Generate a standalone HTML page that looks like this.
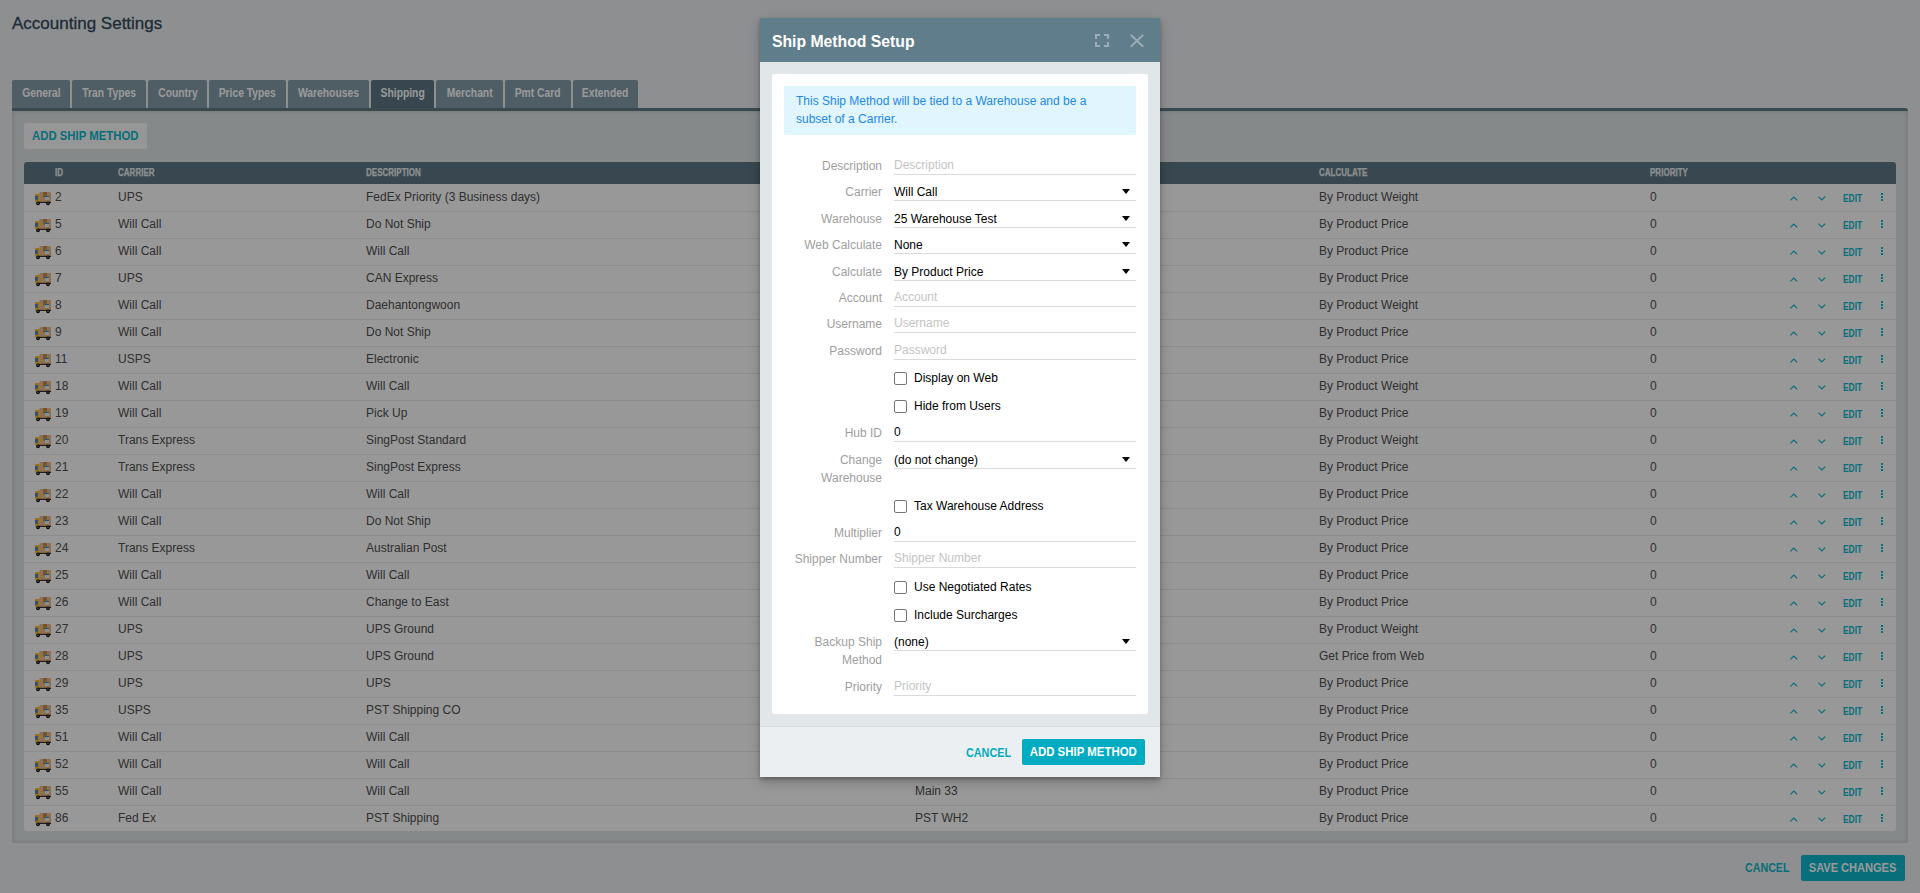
<!DOCTYPE html><html><head><meta charset="utf-8"><title>Ship Method Setup</title><style>
*{box-sizing:border-box;margin:0;padding:0}
html,body{width:1920px;height:893px;overflow:hidden}
body{background:#eceff1;font-family:"Liberation Sans",sans-serif;position:relative;color:#37474f}
.abs{position:absolute}
.title{left:12px;top:14px;font-size:17px;line-height:20px;color:#34495a;-webkit-text-stroke:.3px #34495a;white-space:nowrap}
.tab{position:absolute;top:80px;height:28px;background:#849ca8;border-radius:2px 2px 0 0;color:#fff;font-size:12px;font-weight:bold;line-height:27px;text-align:center;white-space:nowrap}
.sx{display:inline-block;transform:scaleX(.86)}
.tab.act{background:#5e7784}
.bar{left:12px;top:108px;width:1896px;height:3px;background:#627a86;border-radius:0 3px 0 0}
.panel{left:12px;top:111px;width:1896px;height:732px;background:#dfe5e6;border-radius:0 0 3px 3px;box-shadow:inset 0 0 5px rgba(0,0,0,.16)}
.addbtn{left:24px;top:123px;width:123px;height:26px;background:#fafafa;border-radius:2px;color:#0cb8cc;font-size:12px;font-weight:bold;line-height:26px;text-align:center;white-space:nowrap}
.thead{left:24px;top:162px;width:1872px;height:22px;background:#5f7985;border-radius:3px 3px 0 0}
.th{position:absolute;top:-1px;line-height:22px;font-size:11px;font-weight:bold;color:#e8ecee;-webkit-text-stroke:.25px #e8ecee;white-space:nowrap;transform-origin:0 50%;transform:scaleX(.73)}
.tbody{left:24px;top:184px;width:1872px;height:647px;background:#fdfdfd;border-radius:0 0 3px 3px}
.row{position:absolute;left:0;width:1872px;height:27px}
.sep{position:absolute;left:0;width:1872px;height:1px;background:#ebebeb}
.c{position:absolute;top:0;line-height:26px;font-size:12px;color:#505050;white-space:nowrap}
.truck{position:absolute;left:10px;top:7px}
.up{position:absolute;left:1766px;top:11.5px}
.dn{position:absolute;left:1794px;top:11.5px}
.edit{position:absolute;left:1819px;top:1.5px;line-height:26px;font-size:10px;font-weight:bold;color:#0cb8cc;transform-origin:0 50%;transform:scaleX(.84)}
.dots{position:absolute;left:1856px;top:9px}
.fcancel{left:1745px;top:858px;line-height:20px;font-size:12px;font-weight:bold;color:#0cb8cc}
.fsave{left:1801px;top:855px;width:104px;height:26px;background:#0cb8cc;border-radius:2px;color:#fff;font-size:12px;font-weight:bold;line-height:26px;text-align:center;white-space:nowrap}
.overlay{left:0;top:0;width:1920px;height:893px;background:rgba(0,0,0,.4)}
.modal{left:760px;top:18px;width:400px;height:759px;background:#e1e6e9;box-shadow:0 2px 4px rgba(0,0,0,.25),0 5px 12px rgba(0,0,0,.2)}
.mhead{left:0;top:0;width:400px;height:44px;background:#607d8b}
.mtitle{left:12px;top:13px;font-size:17px;line-height:22px;font-weight:bold;color:#fff;white-space:nowrap}
.card{left:12px;top:56px;width:376px;height:640px;background:#fff;border-radius:2px}
.info{left:12px;top:12px;width:352px;height:49px;background:#e1f5fe;border-radius:2px;color:#1e88e5;font-size:12px;line-height:18px;padding:6px 12px}
.lbl{position:absolute;right:266px;font-size:12px;color:#9e9e9e;text-align:right;line-height:18px;white-space:nowrap}
.inp{position:absolute;left:122px;width:242px;border-bottom:1px solid #dadada;font-size:12px;color:#000;line-height:18px;white-space:nowrap}
.ph{color:#c4c4c4}
.tri{position:absolute;right:6px;width:0;height:0;border-left:4px solid transparent;border-right:4px solid transparent;border-top:5px solid #000}
.cb{position:absolute;left:122px;width:13px;height:13px;border:1px solid #767676;border-radius:2px;background:#fff}
.cbt{position:absolute;left:142px;font-size:12px;color:#000;line-height:18px;white-space:nowrap}
.mfoot{left:0;top:708px;width:400px;height:51px;background:#eceff1;border-top:1px solid #d6dbde}
.mcancel{left:206px;top:18px;font-size:12px;font-weight:bold;color:#00acc1;line-height:16px}
.madd{left:262px;top:12px;width:123px;height:26px;background:#00acc1;border-radius:2px;color:#fff;font-size:12px;font-weight:bold;line-height:26px;text-align:center;white-space:nowrap}
</style></head><body>
<div class="abs title">Accounting Settings</div>
<div class="tab" style="left:12px;width:58px"><span class="sx">General</span></div>
<div class="tab" style="left:72px;width:74px"><span class="sx">Tran Types</span></div>
<div class="tab" style="left:148px;width:59px"><span class="sx">Country</span></div>
<div class="tab" style="left:209px;width:77px"><span class="sx">Price Types</span></div>
<div class="tab" style="left:288px;width:81px"><span class="sx">Warehouses</span></div>
<div class="tab act" style="left:371px;width:63px"><span class="sx">Shipping</span></div>
<div class="tab" style="left:436px;width:67px"><span class="sx">Merchant</span></div>
<div class="tab" style="left:505px;width:66px"><span class="sx">Pmt Card</span></div>
<div class="tab" style="left:573px;width:65px"><span class="sx">Extended</span></div>
<div class="abs bar"></div>
<div class="abs panel"></div>
<div class="abs addbtn"><span class="sx" style="transform:scaleX(.947)">ADD SHIP METHOD</span></div>
<div class="abs thead">
<span class="th" style="left:31px">ID</span>
<span class="th" style="left:94px">CARRIER</span>
<span class="th" style="left:342px">DESCRIPTION</span>
<span class="th" style="left:891px">WAREHOUSE</span>
<span class="th" style="left:1295px">CALCULATE</span>
<span class="th" style="left:1626px">PRIORITY</span>
</div>
<div class="abs tbody">
<div class="row" style="top:0px"><svg class="truck" width="18" height="15" viewBox="0 0 18 15"><rect x="5.4" y="1" width="11.6" height="10.3" rx="1" fill="#efbc84"/><rect x="9" y="1" width="4" height="5.5" fill="#c48c52"/><rect x="1" y="3" width="4.6" height="8.3" rx=".8" fill="#f6c02a"/><rect x="1" y="5" width="2.8" height="3.8" fill="#4a82c4"/><rect x="11" y="4.8" width="4" height="4.2" fill="#e2eff5"/><rect x="11" y="4.8" width="4" height="1.2" fill="#2a90d0"/><rect x="4" y="10.8" width="13" height="1.2" fill="#3a3030"/><circle cx="4" cy="12.3" r="1.9" fill="#151010"/><circle cx="14" cy="12.3" r="1.9" fill="#151010"/><circle cx="4" cy="12.3" r=".7" fill="#aaa"/><circle cx="14" cy="12.3" r=".7" fill="#aaa"/></svg><span class="c" style="left:31px">2</span><span class="c" style="left:94px">UPS</span><span class="c" style="left:342px">FedEx Priority (3 Business days)</span><span class="c" style="left:891px">Main</span><span class="c" style="left:1295px">By Product Weight</span><span class="c" style="left:1626px">0</span><svg class="up" width="8" height="5" viewBox="0 0 8 5"><path d="M0.4 4.4 L3.8 1 L7.2 4.4" fill="none" stroke="#0cb8cc" stroke-width="1.15"/></svg><svg class="dn" width="8" height="5" viewBox="0 0 8 5"><path d="M0.4 0.6 L3.8 4 L7.2 0.6" fill="none" stroke="#0cb8cc" stroke-width="1.15"/></svg><span class="edit">EDIT</span><svg class="dots" width="4" height="8" viewBox="0 0 4 8"><rect x="1" y="0" width="2" height="2" fill="#0cb8cc"/><rect x="1" y="3" width="2" height="2" fill="#0cb8cc"/><rect x="1" y="6" width="2" height="2" fill="#0cb8cc"/></svg></div>
<div class="row" style="top:27px"><svg class="truck" width="18" height="15" viewBox="0 0 18 15"><rect x="5.4" y="1" width="11.6" height="10.3" rx="1" fill="#efbc84"/><rect x="9" y="1" width="4" height="5.5" fill="#c48c52"/><rect x="1" y="3" width="4.6" height="8.3" rx=".8" fill="#f6c02a"/><rect x="1" y="5" width="2.8" height="3.8" fill="#4a82c4"/><rect x="11" y="4.8" width="4" height="4.2" fill="#e2eff5"/><rect x="11" y="4.8" width="4" height="1.2" fill="#2a90d0"/><rect x="4" y="10.8" width="13" height="1.2" fill="#3a3030"/><circle cx="4" cy="12.3" r="1.9" fill="#151010"/><circle cx="14" cy="12.3" r="1.9" fill="#151010"/><circle cx="4" cy="12.3" r=".7" fill="#aaa"/><circle cx="14" cy="12.3" r=".7" fill="#aaa"/></svg><span class="c" style="left:31px">5</span><span class="c" style="left:94px">Will Call</span><span class="c" style="left:342px">Do Not Ship</span><span class="c" style="left:891px">Main</span><span class="c" style="left:1295px">By Product Price</span><span class="c" style="left:1626px">0</span><svg class="up" width="8" height="5" viewBox="0 0 8 5"><path d="M0.4 4.4 L3.8 1 L7.2 4.4" fill="none" stroke="#0cb8cc" stroke-width="1.15"/></svg><svg class="dn" width="8" height="5" viewBox="0 0 8 5"><path d="M0.4 0.6 L3.8 4 L7.2 0.6" fill="none" stroke="#0cb8cc" stroke-width="1.15"/></svg><span class="edit">EDIT</span><svg class="dots" width="4" height="8" viewBox="0 0 4 8"><rect x="1" y="0" width="2" height="2" fill="#0cb8cc"/><rect x="1" y="3" width="2" height="2" fill="#0cb8cc"/><rect x="1" y="6" width="2" height="2" fill="#0cb8cc"/></svg></div>
<div class="row" style="top:54px"><svg class="truck" width="18" height="15" viewBox="0 0 18 15"><rect x="5.4" y="1" width="11.6" height="10.3" rx="1" fill="#efbc84"/><rect x="9" y="1" width="4" height="5.5" fill="#c48c52"/><rect x="1" y="3" width="4.6" height="8.3" rx=".8" fill="#f6c02a"/><rect x="1" y="5" width="2.8" height="3.8" fill="#4a82c4"/><rect x="11" y="4.8" width="4" height="4.2" fill="#e2eff5"/><rect x="11" y="4.8" width="4" height="1.2" fill="#2a90d0"/><rect x="4" y="10.8" width="13" height="1.2" fill="#3a3030"/><circle cx="4" cy="12.3" r="1.9" fill="#151010"/><circle cx="14" cy="12.3" r="1.9" fill="#151010"/><circle cx="4" cy="12.3" r=".7" fill="#aaa"/><circle cx="14" cy="12.3" r=".7" fill="#aaa"/></svg><span class="c" style="left:31px">6</span><span class="c" style="left:94px">Will Call</span><span class="c" style="left:342px">Will Call</span><span class="c" style="left:891px">Main</span><span class="c" style="left:1295px">By Product Price</span><span class="c" style="left:1626px">0</span><svg class="up" width="8" height="5" viewBox="0 0 8 5"><path d="M0.4 4.4 L3.8 1 L7.2 4.4" fill="none" stroke="#0cb8cc" stroke-width="1.15"/></svg><svg class="dn" width="8" height="5" viewBox="0 0 8 5"><path d="M0.4 0.6 L3.8 4 L7.2 0.6" fill="none" stroke="#0cb8cc" stroke-width="1.15"/></svg><span class="edit">EDIT</span><svg class="dots" width="4" height="8" viewBox="0 0 4 8"><rect x="1" y="0" width="2" height="2" fill="#0cb8cc"/><rect x="1" y="3" width="2" height="2" fill="#0cb8cc"/><rect x="1" y="6" width="2" height="2" fill="#0cb8cc"/></svg></div>
<div class="row" style="top:81px"><svg class="truck" width="18" height="15" viewBox="0 0 18 15"><rect x="5.4" y="1" width="11.6" height="10.3" rx="1" fill="#efbc84"/><rect x="9" y="1" width="4" height="5.5" fill="#c48c52"/><rect x="1" y="3" width="4.6" height="8.3" rx=".8" fill="#f6c02a"/><rect x="1" y="5" width="2.8" height="3.8" fill="#4a82c4"/><rect x="11" y="4.8" width="4" height="4.2" fill="#e2eff5"/><rect x="11" y="4.8" width="4" height="1.2" fill="#2a90d0"/><rect x="4" y="10.8" width="13" height="1.2" fill="#3a3030"/><circle cx="4" cy="12.3" r="1.9" fill="#151010"/><circle cx="14" cy="12.3" r="1.9" fill="#151010"/><circle cx="4" cy="12.3" r=".7" fill="#aaa"/><circle cx="14" cy="12.3" r=".7" fill="#aaa"/></svg><span class="c" style="left:31px">7</span><span class="c" style="left:94px">UPS</span><span class="c" style="left:342px">CAN Express</span><span class="c" style="left:891px">Main</span><span class="c" style="left:1295px">By Product Price</span><span class="c" style="left:1626px">0</span><svg class="up" width="8" height="5" viewBox="0 0 8 5"><path d="M0.4 4.4 L3.8 1 L7.2 4.4" fill="none" stroke="#0cb8cc" stroke-width="1.15"/></svg><svg class="dn" width="8" height="5" viewBox="0 0 8 5"><path d="M0.4 0.6 L3.8 4 L7.2 0.6" fill="none" stroke="#0cb8cc" stroke-width="1.15"/></svg><span class="edit">EDIT</span><svg class="dots" width="4" height="8" viewBox="0 0 4 8"><rect x="1" y="0" width="2" height="2" fill="#0cb8cc"/><rect x="1" y="3" width="2" height="2" fill="#0cb8cc"/><rect x="1" y="6" width="2" height="2" fill="#0cb8cc"/></svg></div>
<div class="row" style="top:108px"><svg class="truck" width="18" height="15" viewBox="0 0 18 15"><rect x="5.4" y="1" width="11.6" height="10.3" rx="1" fill="#efbc84"/><rect x="9" y="1" width="4" height="5.5" fill="#c48c52"/><rect x="1" y="3" width="4.6" height="8.3" rx=".8" fill="#f6c02a"/><rect x="1" y="5" width="2.8" height="3.8" fill="#4a82c4"/><rect x="11" y="4.8" width="4" height="4.2" fill="#e2eff5"/><rect x="11" y="4.8" width="4" height="1.2" fill="#2a90d0"/><rect x="4" y="10.8" width="13" height="1.2" fill="#3a3030"/><circle cx="4" cy="12.3" r="1.9" fill="#151010"/><circle cx="14" cy="12.3" r="1.9" fill="#151010"/><circle cx="4" cy="12.3" r=".7" fill="#aaa"/><circle cx="14" cy="12.3" r=".7" fill="#aaa"/></svg><span class="c" style="left:31px">8</span><span class="c" style="left:94px">Will Call</span><span class="c" style="left:342px">Daehantongwoon</span><span class="c" style="left:891px">Main</span><span class="c" style="left:1295px">By Product Weight</span><span class="c" style="left:1626px">0</span><svg class="up" width="8" height="5" viewBox="0 0 8 5"><path d="M0.4 4.4 L3.8 1 L7.2 4.4" fill="none" stroke="#0cb8cc" stroke-width="1.15"/></svg><svg class="dn" width="8" height="5" viewBox="0 0 8 5"><path d="M0.4 0.6 L3.8 4 L7.2 0.6" fill="none" stroke="#0cb8cc" stroke-width="1.15"/></svg><span class="edit">EDIT</span><svg class="dots" width="4" height="8" viewBox="0 0 4 8"><rect x="1" y="0" width="2" height="2" fill="#0cb8cc"/><rect x="1" y="3" width="2" height="2" fill="#0cb8cc"/><rect x="1" y="6" width="2" height="2" fill="#0cb8cc"/></svg></div>
<div class="row" style="top:135px"><svg class="truck" width="18" height="15" viewBox="0 0 18 15"><rect x="5.4" y="1" width="11.6" height="10.3" rx="1" fill="#efbc84"/><rect x="9" y="1" width="4" height="5.5" fill="#c48c52"/><rect x="1" y="3" width="4.6" height="8.3" rx=".8" fill="#f6c02a"/><rect x="1" y="5" width="2.8" height="3.8" fill="#4a82c4"/><rect x="11" y="4.8" width="4" height="4.2" fill="#e2eff5"/><rect x="11" y="4.8" width="4" height="1.2" fill="#2a90d0"/><rect x="4" y="10.8" width="13" height="1.2" fill="#3a3030"/><circle cx="4" cy="12.3" r="1.9" fill="#151010"/><circle cx="14" cy="12.3" r="1.9" fill="#151010"/><circle cx="4" cy="12.3" r=".7" fill="#aaa"/><circle cx="14" cy="12.3" r=".7" fill="#aaa"/></svg><span class="c" style="left:31px">9</span><span class="c" style="left:94px">Will Call</span><span class="c" style="left:342px">Do Not Ship</span><span class="c" style="left:891px">Main</span><span class="c" style="left:1295px">By Product Price</span><span class="c" style="left:1626px">0</span><svg class="up" width="8" height="5" viewBox="0 0 8 5"><path d="M0.4 4.4 L3.8 1 L7.2 4.4" fill="none" stroke="#0cb8cc" stroke-width="1.15"/></svg><svg class="dn" width="8" height="5" viewBox="0 0 8 5"><path d="M0.4 0.6 L3.8 4 L7.2 0.6" fill="none" stroke="#0cb8cc" stroke-width="1.15"/></svg><span class="edit">EDIT</span><svg class="dots" width="4" height="8" viewBox="0 0 4 8"><rect x="1" y="0" width="2" height="2" fill="#0cb8cc"/><rect x="1" y="3" width="2" height="2" fill="#0cb8cc"/><rect x="1" y="6" width="2" height="2" fill="#0cb8cc"/></svg></div>
<div class="row" style="top:162px"><svg class="truck" width="18" height="15" viewBox="0 0 18 15"><rect x="5.4" y="1" width="11.6" height="10.3" rx="1" fill="#efbc84"/><rect x="9" y="1" width="4" height="5.5" fill="#c48c52"/><rect x="1" y="3" width="4.6" height="8.3" rx=".8" fill="#f6c02a"/><rect x="1" y="5" width="2.8" height="3.8" fill="#4a82c4"/><rect x="11" y="4.8" width="4" height="4.2" fill="#e2eff5"/><rect x="11" y="4.8" width="4" height="1.2" fill="#2a90d0"/><rect x="4" y="10.8" width="13" height="1.2" fill="#3a3030"/><circle cx="4" cy="12.3" r="1.9" fill="#151010"/><circle cx="14" cy="12.3" r="1.9" fill="#151010"/><circle cx="4" cy="12.3" r=".7" fill="#aaa"/><circle cx="14" cy="12.3" r=".7" fill="#aaa"/></svg><span class="c" style="left:31px">11</span><span class="c" style="left:94px">USPS</span><span class="c" style="left:342px">Electronic</span><span class="c" style="left:891px">Main</span><span class="c" style="left:1295px">By Product Price</span><span class="c" style="left:1626px">0</span><svg class="up" width="8" height="5" viewBox="0 0 8 5"><path d="M0.4 4.4 L3.8 1 L7.2 4.4" fill="none" stroke="#0cb8cc" stroke-width="1.15"/></svg><svg class="dn" width="8" height="5" viewBox="0 0 8 5"><path d="M0.4 0.6 L3.8 4 L7.2 0.6" fill="none" stroke="#0cb8cc" stroke-width="1.15"/></svg><span class="edit">EDIT</span><svg class="dots" width="4" height="8" viewBox="0 0 4 8"><rect x="1" y="0" width="2" height="2" fill="#0cb8cc"/><rect x="1" y="3" width="2" height="2" fill="#0cb8cc"/><rect x="1" y="6" width="2" height="2" fill="#0cb8cc"/></svg></div>
<div class="row" style="top:189px"><svg class="truck" width="18" height="15" viewBox="0 0 18 15"><rect x="5.4" y="1" width="11.6" height="10.3" rx="1" fill="#efbc84"/><rect x="9" y="1" width="4" height="5.5" fill="#c48c52"/><rect x="1" y="3" width="4.6" height="8.3" rx=".8" fill="#f6c02a"/><rect x="1" y="5" width="2.8" height="3.8" fill="#4a82c4"/><rect x="11" y="4.8" width="4" height="4.2" fill="#e2eff5"/><rect x="11" y="4.8" width="4" height="1.2" fill="#2a90d0"/><rect x="4" y="10.8" width="13" height="1.2" fill="#3a3030"/><circle cx="4" cy="12.3" r="1.9" fill="#151010"/><circle cx="14" cy="12.3" r="1.9" fill="#151010"/><circle cx="4" cy="12.3" r=".7" fill="#aaa"/><circle cx="14" cy="12.3" r=".7" fill="#aaa"/></svg><span class="c" style="left:31px">18</span><span class="c" style="left:94px">Will Call</span><span class="c" style="left:342px">Will Call</span><span class="c" style="left:891px">Main</span><span class="c" style="left:1295px">By Product Weight</span><span class="c" style="left:1626px">0</span><svg class="up" width="8" height="5" viewBox="0 0 8 5"><path d="M0.4 4.4 L3.8 1 L7.2 4.4" fill="none" stroke="#0cb8cc" stroke-width="1.15"/></svg><svg class="dn" width="8" height="5" viewBox="0 0 8 5"><path d="M0.4 0.6 L3.8 4 L7.2 0.6" fill="none" stroke="#0cb8cc" stroke-width="1.15"/></svg><span class="edit">EDIT</span><svg class="dots" width="4" height="8" viewBox="0 0 4 8"><rect x="1" y="0" width="2" height="2" fill="#0cb8cc"/><rect x="1" y="3" width="2" height="2" fill="#0cb8cc"/><rect x="1" y="6" width="2" height="2" fill="#0cb8cc"/></svg></div>
<div class="row" style="top:216px"><svg class="truck" width="18" height="15" viewBox="0 0 18 15"><rect x="5.4" y="1" width="11.6" height="10.3" rx="1" fill="#efbc84"/><rect x="9" y="1" width="4" height="5.5" fill="#c48c52"/><rect x="1" y="3" width="4.6" height="8.3" rx=".8" fill="#f6c02a"/><rect x="1" y="5" width="2.8" height="3.8" fill="#4a82c4"/><rect x="11" y="4.8" width="4" height="4.2" fill="#e2eff5"/><rect x="11" y="4.8" width="4" height="1.2" fill="#2a90d0"/><rect x="4" y="10.8" width="13" height="1.2" fill="#3a3030"/><circle cx="4" cy="12.3" r="1.9" fill="#151010"/><circle cx="14" cy="12.3" r="1.9" fill="#151010"/><circle cx="4" cy="12.3" r=".7" fill="#aaa"/><circle cx="14" cy="12.3" r=".7" fill="#aaa"/></svg><span class="c" style="left:31px">19</span><span class="c" style="left:94px">Will Call</span><span class="c" style="left:342px">Pick Up</span><span class="c" style="left:891px">Main</span><span class="c" style="left:1295px">By Product Price</span><span class="c" style="left:1626px">0</span><svg class="up" width="8" height="5" viewBox="0 0 8 5"><path d="M0.4 4.4 L3.8 1 L7.2 4.4" fill="none" stroke="#0cb8cc" stroke-width="1.15"/></svg><svg class="dn" width="8" height="5" viewBox="0 0 8 5"><path d="M0.4 0.6 L3.8 4 L7.2 0.6" fill="none" stroke="#0cb8cc" stroke-width="1.15"/></svg><span class="edit">EDIT</span><svg class="dots" width="4" height="8" viewBox="0 0 4 8"><rect x="1" y="0" width="2" height="2" fill="#0cb8cc"/><rect x="1" y="3" width="2" height="2" fill="#0cb8cc"/><rect x="1" y="6" width="2" height="2" fill="#0cb8cc"/></svg></div>
<div class="row" style="top:243px"><svg class="truck" width="18" height="15" viewBox="0 0 18 15"><rect x="5.4" y="1" width="11.6" height="10.3" rx="1" fill="#efbc84"/><rect x="9" y="1" width="4" height="5.5" fill="#c48c52"/><rect x="1" y="3" width="4.6" height="8.3" rx=".8" fill="#f6c02a"/><rect x="1" y="5" width="2.8" height="3.8" fill="#4a82c4"/><rect x="11" y="4.8" width="4" height="4.2" fill="#e2eff5"/><rect x="11" y="4.8" width="4" height="1.2" fill="#2a90d0"/><rect x="4" y="10.8" width="13" height="1.2" fill="#3a3030"/><circle cx="4" cy="12.3" r="1.9" fill="#151010"/><circle cx="14" cy="12.3" r="1.9" fill="#151010"/><circle cx="4" cy="12.3" r=".7" fill="#aaa"/><circle cx="14" cy="12.3" r=".7" fill="#aaa"/></svg><span class="c" style="left:31px">20</span><span class="c" style="left:94px">Trans Express</span><span class="c" style="left:342px">SingPost Standard</span><span class="c" style="left:891px">Main</span><span class="c" style="left:1295px">By Product Weight</span><span class="c" style="left:1626px">0</span><svg class="up" width="8" height="5" viewBox="0 0 8 5"><path d="M0.4 4.4 L3.8 1 L7.2 4.4" fill="none" stroke="#0cb8cc" stroke-width="1.15"/></svg><svg class="dn" width="8" height="5" viewBox="0 0 8 5"><path d="M0.4 0.6 L3.8 4 L7.2 0.6" fill="none" stroke="#0cb8cc" stroke-width="1.15"/></svg><span class="edit">EDIT</span><svg class="dots" width="4" height="8" viewBox="0 0 4 8"><rect x="1" y="0" width="2" height="2" fill="#0cb8cc"/><rect x="1" y="3" width="2" height="2" fill="#0cb8cc"/><rect x="1" y="6" width="2" height="2" fill="#0cb8cc"/></svg></div>
<div class="row" style="top:270px"><svg class="truck" width="18" height="15" viewBox="0 0 18 15"><rect x="5.4" y="1" width="11.6" height="10.3" rx="1" fill="#efbc84"/><rect x="9" y="1" width="4" height="5.5" fill="#c48c52"/><rect x="1" y="3" width="4.6" height="8.3" rx=".8" fill="#f6c02a"/><rect x="1" y="5" width="2.8" height="3.8" fill="#4a82c4"/><rect x="11" y="4.8" width="4" height="4.2" fill="#e2eff5"/><rect x="11" y="4.8" width="4" height="1.2" fill="#2a90d0"/><rect x="4" y="10.8" width="13" height="1.2" fill="#3a3030"/><circle cx="4" cy="12.3" r="1.9" fill="#151010"/><circle cx="14" cy="12.3" r="1.9" fill="#151010"/><circle cx="4" cy="12.3" r=".7" fill="#aaa"/><circle cx="14" cy="12.3" r=".7" fill="#aaa"/></svg><span class="c" style="left:31px">21</span><span class="c" style="left:94px">Trans Express</span><span class="c" style="left:342px">SingPost Express</span><span class="c" style="left:891px">Main</span><span class="c" style="left:1295px">By Product Price</span><span class="c" style="left:1626px">0</span><svg class="up" width="8" height="5" viewBox="0 0 8 5"><path d="M0.4 4.4 L3.8 1 L7.2 4.4" fill="none" stroke="#0cb8cc" stroke-width="1.15"/></svg><svg class="dn" width="8" height="5" viewBox="0 0 8 5"><path d="M0.4 0.6 L3.8 4 L7.2 0.6" fill="none" stroke="#0cb8cc" stroke-width="1.15"/></svg><span class="edit">EDIT</span><svg class="dots" width="4" height="8" viewBox="0 0 4 8"><rect x="1" y="0" width="2" height="2" fill="#0cb8cc"/><rect x="1" y="3" width="2" height="2" fill="#0cb8cc"/><rect x="1" y="6" width="2" height="2" fill="#0cb8cc"/></svg></div>
<div class="row" style="top:297px"><svg class="truck" width="18" height="15" viewBox="0 0 18 15"><rect x="5.4" y="1" width="11.6" height="10.3" rx="1" fill="#efbc84"/><rect x="9" y="1" width="4" height="5.5" fill="#c48c52"/><rect x="1" y="3" width="4.6" height="8.3" rx=".8" fill="#f6c02a"/><rect x="1" y="5" width="2.8" height="3.8" fill="#4a82c4"/><rect x="11" y="4.8" width="4" height="4.2" fill="#e2eff5"/><rect x="11" y="4.8" width="4" height="1.2" fill="#2a90d0"/><rect x="4" y="10.8" width="13" height="1.2" fill="#3a3030"/><circle cx="4" cy="12.3" r="1.9" fill="#151010"/><circle cx="14" cy="12.3" r="1.9" fill="#151010"/><circle cx="4" cy="12.3" r=".7" fill="#aaa"/><circle cx="14" cy="12.3" r=".7" fill="#aaa"/></svg><span class="c" style="left:31px">22</span><span class="c" style="left:94px">Will Call</span><span class="c" style="left:342px">Will Call</span><span class="c" style="left:891px">Main</span><span class="c" style="left:1295px">By Product Price</span><span class="c" style="left:1626px">0</span><svg class="up" width="8" height="5" viewBox="0 0 8 5"><path d="M0.4 4.4 L3.8 1 L7.2 4.4" fill="none" stroke="#0cb8cc" stroke-width="1.15"/></svg><svg class="dn" width="8" height="5" viewBox="0 0 8 5"><path d="M0.4 0.6 L3.8 4 L7.2 0.6" fill="none" stroke="#0cb8cc" stroke-width="1.15"/></svg><span class="edit">EDIT</span><svg class="dots" width="4" height="8" viewBox="0 0 4 8"><rect x="1" y="0" width="2" height="2" fill="#0cb8cc"/><rect x="1" y="3" width="2" height="2" fill="#0cb8cc"/><rect x="1" y="6" width="2" height="2" fill="#0cb8cc"/></svg></div>
<div class="row" style="top:324px"><svg class="truck" width="18" height="15" viewBox="0 0 18 15"><rect x="5.4" y="1" width="11.6" height="10.3" rx="1" fill="#efbc84"/><rect x="9" y="1" width="4" height="5.5" fill="#c48c52"/><rect x="1" y="3" width="4.6" height="8.3" rx=".8" fill="#f6c02a"/><rect x="1" y="5" width="2.8" height="3.8" fill="#4a82c4"/><rect x="11" y="4.8" width="4" height="4.2" fill="#e2eff5"/><rect x="11" y="4.8" width="4" height="1.2" fill="#2a90d0"/><rect x="4" y="10.8" width="13" height="1.2" fill="#3a3030"/><circle cx="4" cy="12.3" r="1.9" fill="#151010"/><circle cx="14" cy="12.3" r="1.9" fill="#151010"/><circle cx="4" cy="12.3" r=".7" fill="#aaa"/><circle cx="14" cy="12.3" r=".7" fill="#aaa"/></svg><span class="c" style="left:31px">23</span><span class="c" style="left:94px">Will Call</span><span class="c" style="left:342px">Do Not Ship</span><span class="c" style="left:891px">Main</span><span class="c" style="left:1295px">By Product Price</span><span class="c" style="left:1626px">0</span><svg class="up" width="8" height="5" viewBox="0 0 8 5"><path d="M0.4 4.4 L3.8 1 L7.2 4.4" fill="none" stroke="#0cb8cc" stroke-width="1.15"/></svg><svg class="dn" width="8" height="5" viewBox="0 0 8 5"><path d="M0.4 0.6 L3.8 4 L7.2 0.6" fill="none" stroke="#0cb8cc" stroke-width="1.15"/></svg><span class="edit">EDIT</span><svg class="dots" width="4" height="8" viewBox="0 0 4 8"><rect x="1" y="0" width="2" height="2" fill="#0cb8cc"/><rect x="1" y="3" width="2" height="2" fill="#0cb8cc"/><rect x="1" y="6" width="2" height="2" fill="#0cb8cc"/></svg></div>
<div class="row" style="top:351px"><svg class="truck" width="18" height="15" viewBox="0 0 18 15"><rect x="5.4" y="1" width="11.6" height="10.3" rx="1" fill="#efbc84"/><rect x="9" y="1" width="4" height="5.5" fill="#c48c52"/><rect x="1" y="3" width="4.6" height="8.3" rx=".8" fill="#f6c02a"/><rect x="1" y="5" width="2.8" height="3.8" fill="#4a82c4"/><rect x="11" y="4.8" width="4" height="4.2" fill="#e2eff5"/><rect x="11" y="4.8" width="4" height="1.2" fill="#2a90d0"/><rect x="4" y="10.8" width="13" height="1.2" fill="#3a3030"/><circle cx="4" cy="12.3" r="1.9" fill="#151010"/><circle cx="14" cy="12.3" r="1.9" fill="#151010"/><circle cx="4" cy="12.3" r=".7" fill="#aaa"/><circle cx="14" cy="12.3" r=".7" fill="#aaa"/></svg><span class="c" style="left:31px">24</span><span class="c" style="left:94px">Trans Express</span><span class="c" style="left:342px">Australian Post</span><span class="c" style="left:891px">Main</span><span class="c" style="left:1295px">By Product Price</span><span class="c" style="left:1626px">0</span><svg class="up" width="8" height="5" viewBox="0 0 8 5"><path d="M0.4 4.4 L3.8 1 L7.2 4.4" fill="none" stroke="#0cb8cc" stroke-width="1.15"/></svg><svg class="dn" width="8" height="5" viewBox="0 0 8 5"><path d="M0.4 0.6 L3.8 4 L7.2 0.6" fill="none" stroke="#0cb8cc" stroke-width="1.15"/></svg><span class="edit">EDIT</span><svg class="dots" width="4" height="8" viewBox="0 0 4 8"><rect x="1" y="0" width="2" height="2" fill="#0cb8cc"/><rect x="1" y="3" width="2" height="2" fill="#0cb8cc"/><rect x="1" y="6" width="2" height="2" fill="#0cb8cc"/></svg></div>
<div class="row" style="top:378px"><svg class="truck" width="18" height="15" viewBox="0 0 18 15"><rect x="5.4" y="1" width="11.6" height="10.3" rx="1" fill="#efbc84"/><rect x="9" y="1" width="4" height="5.5" fill="#c48c52"/><rect x="1" y="3" width="4.6" height="8.3" rx=".8" fill="#f6c02a"/><rect x="1" y="5" width="2.8" height="3.8" fill="#4a82c4"/><rect x="11" y="4.8" width="4" height="4.2" fill="#e2eff5"/><rect x="11" y="4.8" width="4" height="1.2" fill="#2a90d0"/><rect x="4" y="10.8" width="13" height="1.2" fill="#3a3030"/><circle cx="4" cy="12.3" r="1.9" fill="#151010"/><circle cx="14" cy="12.3" r="1.9" fill="#151010"/><circle cx="4" cy="12.3" r=".7" fill="#aaa"/><circle cx="14" cy="12.3" r=".7" fill="#aaa"/></svg><span class="c" style="left:31px">25</span><span class="c" style="left:94px">Will Call</span><span class="c" style="left:342px">Will Call</span><span class="c" style="left:891px">Main</span><span class="c" style="left:1295px">By Product Price</span><span class="c" style="left:1626px">0</span><svg class="up" width="8" height="5" viewBox="0 0 8 5"><path d="M0.4 4.4 L3.8 1 L7.2 4.4" fill="none" stroke="#0cb8cc" stroke-width="1.15"/></svg><svg class="dn" width="8" height="5" viewBox="0 0 8 5"><path d="M0.4 0.6 L3.8 4 L7.2 0.6" fill="none" stroke="#0cb8cc" stroke-width="1.15"/></svg><span class="edit">EDIT</span><svg class="dots" width="4" height="8" viewBox="0 0 4 8"><rect x="1" y="0" width="2" height="2" fill="#0cb8cc"/><rect x="1" y="3" width="2" height="2" fill="#0cb8cc"/><rect x="1" y="6" width="2" height="2" fill="#0cb8cc"/></svg></div>
<div class="row" style="top:405px"><svg class="truck" width="18" height="15" viewBox="0 0 18 15"><rect x="5.4" y="1" width="11.6" height="10.3" rx="1" fill="#efbc84"/><rect x="9" y="1" width="4" height="5.5" fill="#c48c52"/><rect x="1" y="3" width="4.6" height="8.3" rx=".8" fill="#f6c02a"/><rect x="1" y="5" width="2.8" height="3.8" fill="#4a82c4"/><rect x="11" y="4.8" width="4" height="4.2" fill="#e2eff5"/><rect x="11" y="4.8" width="4" height="1.2" fill="#2a90d0"/><rect x="4" y="10.8" width="13" height="1.2" fill="#3a3030"/><circle cx="4" cy="12.3" r="1.9" fill="#151010"/><circle cx="14" cy="12.3" r="1.9" fill="#151010"/><circle cx="4" cy="12.3" r=".7" fill="#aaa"/><circle cx="14" cy="12.3" r=".7" fill="#aaa"/></svg><span class="c" style="left:31px">26</span><span class="c" style="left:94px">Will Call</span><span class="c" style="left:342px">Change to East</span><span class="c" style="left:891px">Main</span><span class="c" style="left:1295px">By Product Price</span><span class="c" style="left:1626px">0</span><svg class="up" width="8" height="5" viewBox="0 0 8 5"><path d="M0.4 4.4 L3.8 1 L7.2 4.4" fill="none" stroke="#0cb8cc" stroke-width="1.15"/></svg><svg class="dn" width="8" height="5" viewBox="0 0 8 5"><path d="M0.4 0.6 L3.8 4 L7.2 0.6" fill="none" stroke="#0cb8cc" stroke-width="1.15"/></svg><span class="edit">EDIT</span><svg class="dots" width="4" height="8" viewBox="0 0 4 8"><rect x="1" y="0" width="2" height="2" fill="#0cb8cc"/><rect x="1" y="3" width="2" height="2" fill="#0cb8cc"/><rect x="1" y="6" width="2" height="2" fill="#0cb8cc"/></svg></div>
<div class="row" style="top:432px"><svg class="truck" width="18" height="15" viewBox="0 0 18 15"><rect x="5.4" y="1" width="11.6" height="10.3" rx="1" fill="#efbc84"/><rect x="9" y="1" width="4" height="5.5" fill="#c48c52"/><rect x="1" y="3" width="4.6" height="8.3" rx=".8" fill="#f6c02a"/><rect x="1" y="5" width="2.8" height="3.8" fill="#4a82c4"/><rect x="11" y="4.8" width="4" height="4.2" fill="#e2eff5"/><rect x="11" y="4.8" width="4" height="1.2" fill="#2a90d0"/><rect x="4" y="10.8" width="13" height="1.2" fill="#3a3030"/><circle cx="4" cy="12.3" r="1.9" fill="#151010"/><circle cx="14" cy="12.3" r="1.9" fill="#151010"/><circle cx="4" cy="12.3" r=".7" fill="#aaa"/><circle cx="14" cy="12.3" r=".7" fill="#aaa"/></svg><span class="c" style="left:31px">27</span><span class="c" style="left:94px">UPS</span><span class="c" style="left:342px">UPS Ground</span><span class="c" style="left:891px">Main</span><span class="c" style="left:1295px">By Product Weight</span><span class="c" style="left:1626px">0</span><svg class="up" width="8" height="5" viewBox="0 0 8 5"><path d="M0.4 4.4 L3.8 1 L7.2 4.4" fill="none" stroke="#0cb8cc" stroke-width="1.15"/></svg><svg class="dn" width="8" height="5" viewBox="0 0 8 5"><path d="M0.4 0.6 L3.8 4 L7.2 0.6" fill="none" stroke="#0cb8cc" stroke-width="1.15"/></svg><span class="edit">EDIT</span><svg class="dots" width="4" height="8" viewBox="0 0 4 8"><rect x="1" y="0" width="2" height="2" fill="#0cb8cc"/><rect x="1" y="3" width="2" height="2" fill="#0cb8cc"/><rect x="1" y="6" width="2" height="2" fill="#0cb8cc"/></svg></div>
<div class="row" style="top:459px"><svg class="truck" width="18" height="15" viewBox="0 0 18 15"><rect x="5.4" y="1" width="11.6" height="10.3" rx="1" fill="#efbc84"/><rect x="9" y="1" width="4" height="5.5" fill="#c48c52"/><rect x="1" y="3" width="4.6" height="8.3" rx=".8" fill="#f6c02a"/><rect x="1" y="5" width="2.8" height="3.8" fill="#4a82c4"/><rect x="11" y="4.8" width="4" height="4.2" fill="#e2eff5"/><rect x="11" y="4.8" width="4" height="1.2" fill="#2a90d0"/><rect x="4" y="10.8" width="13" height="1.2" fill="#3a3030"/><circle cx="4" cy="12.3" r="1.9" fill="#151010"/><circle cx="14" cy="12.3" r="1.9" fill="#151010"/><circle cx="4" cy="12.3" r=".7" fill="#aaa"/><circle cx="14" cy="12.3" r=".7" fill="#aaa"/></svg><span class="c" style="left:31px">28</span><span class="c" style="left:94px">UPS</span><span class="c" style="left:342px">UPS Ground</span><span class="c" style="left:891px">Main</span><span class="c" style="left:1295px">Get Price from Web</span><span class="c" style="left:1626px">0</span><svg class="up" width="8" height="5" viewBox="0 0 8 5"><path d="M0.4 4.4 L3.8 1 L7.2 4.4" fill="none" stroke="#0cb8cc" stroke-width="1.15"/></svg><svg class="dn" width="8" height="5" viewBox="0 0 8 5"><path d="M0.4 0.6 L3.8 4 L7.2 0.6" fill="none" stroke="#0cb8cc" stroke-width="1.15"/></svg><span class="edit">EDIT</span><svg class="dots" width="4" height="8" viewBox="0 0 4 8"><rect x="1" y="0" width="2" height="2" fill="#0cb8cc"/><rect x="1" y="3" width="2" height="2" fill="#0cb8cc"/><rect x="1" y="6" width="2" height="2" fill="#0cb8cc"/></svg></div>
<div class="row" style="top:486px"><svg class="truck" width="18" height="15" viewBox="0 0 18 15"><rect x="5.4" y="1" width="11.6" height="10.3" rx="1" fill="#efbc84"/><rect x="9" y="1" width="4" height="5.5" fill="#c48c52"/><rect x="1" y="3" width="4.6" height="8.3" rx=".8" fill="#f6c02a"/><rect x="1" y="5" width="2.8" height="3.8" fill="#4a82c4"/><rect x="11" y="4.8" width="4" height="4.2" fill="#e2eff5"/><rect x="11" y="4.8" width="4" height="1.2" fill="#2a90d0"/><rect x="4" y="10.8" width="13" height="1.2" fill="#3a3030"/><circle cx="4" cy="12.3" r="1.9" fill="#151010"/><circle cx="14" cy="12.3" r="1.9" fill="#151010"/><circle cx="4" cy="12.3" r=".7" fill="#aaa"/><circle cx="14" cy="12.3" r=".7" fill="#aaa"/></svg><span class="c" style="left:31px">29</span><span class="c" style="left:94px">UPS</span><span class="c" style="left:342px">UPS</span><span class="c" style="left:891px">Main</span><span class="c" style="left:1295px">By Product Price</span><span class="c" style="left:1626px">0</span><svg class="up" width="8" height="5" viewBox="0 0 8 5"><path d="M0.4 4.4 L3.8 1 L7.2 4.4" fill="none" stroke="#0cb8cc" stroke-width="1.15"/></svg><svg class="dn" width="8" height="5" viewBox="0 0 8 5"><path d="M0.4 0.6 L3.8 4 L7.2 0.6" fill="none" stroke="#0cb8cc" stroke-width="1.15"/></svg><span class="edit">EDIT</span><svg class="dots" width="4" height="8" viewBox="0 0 4 8"><rect x="1" y="0" width="2" height="2" fill="#0cb8cc"/><rect x="1" y="3" width="2" height="2" fill="#0cb8cc"/><rect x="1" y="6" width="2" height="2" fill="#0cb8cc"/></svg></div>
<div class="row" style="top:513px"><svg class="truck" width="18" height="15" viewBox="0 0 18 15"><rect x="5.4" y="1" width="11.6" height="10.3" rx="1" fill="#efbc84"/><rect x="9" y="1" width="4" height="5.5" fill="#c48c52"/><rect x="1" y="3" width="4.6" height="8.3" rx=".8" fill="#f6c02a"/><rect x="1" y="5" width="2.8" height="3.8" fill="#4a82c4"/><rect x="11" y="4.8" width="4" height="4.2" fill="#e2eff5"/><rect x="11" y="4.8" width="4" height="1.2" fill="#2a90d0"/><rect x="4" y="10.8" width="13" height="1.2" fill="#3a3030"/><circle cx="4" cy="12.3" r="1.9" fill="#151010"/><circle cx="14" cy="12.3" r="1.9" fill="#151010"/><circle cx="4" cy="12.3" r=".7" fill="#aaa"/><circle cx="14" cy="12.3" r=".7" fill="#aaa"/></svg><span class="c" style="left:31px">35</span><span class="c" style="left:94px">USPS</span><span class="c" style="left:342px">PST Shipping CO</span><span class="c" style="left:891px">Main</span><span class="c" style="left:1295px">By Product Price</span><span class="c" style="left:1626px">0</span><svg class="up" width="8" height="5" viewBox="0 0 8 5"><path d="M0.4 4.4 L3.8 1 L7.2 4.4" fill="none" stroke="#0cb8cc" stroke-width="1.15"/></svg><svg class="dn" width="8" height="5" viewBox="0 0 8 5"><path d="M0.4 0.6 L3.8 4 L7.2 0.6" fill="none" stroke="#0cb8cc" stroke-width="1.15"/></svg><span class="edit">EDIT</span><svg class="dots" width="4" height="8" viewBox="0 0 4 8"><rect x="1" y="0" width="2" height="2" fill="#0cb8cc"/><rect x="1" y="3" width="2" height="2" fill="#0cb8cc"/><rect x="1" y="6" width="2" height="2" fill="#0cb8cc"/></svg></div>
<div class="row" style="top:540px"><svg class="truck" width="18" height="15" viewBox="0 0 18 15"><rect x="5.4" y="1" width="11.6" height="10.3" rx="1" fill="#efbc84"/><rect x="9" y="1" width="4" height="5.5" fill="#c48c52"/><rect x="1" y="3" width="4.6" height="8.3" rx=".8" fill="#f6c02a"/><rect x="1" y="5" width="2.8" height="3.8" fill="#4a82c4"/><rect x="11" y="4.8" width="4" height="4.2" fill="#e2eff5"/><rect x="11" y="4.8" width="4" height="1.2" fill="#2a90d0"/><rect x="4" y="10.8" width="13" height="1.2" fill="#3a3030"/><circle cx="4" cy="12.3" r="1.9" fill="#151010"/><circle cx="14" cy="12.3" r="1.9" fill="#151010"/><circle cx="4" cy="12.3" r=".7" fill="#aaa"/><circle cx="14" cy="12.3" r=".7" fill="#aaa"/></svg><span class="c" style="left:31px">51</span><span class="c" style="left:94px">Will Call</span><span class="c" style="left:342px">Will Call</span><span class="c" style="left:891px">Main</span><span class="c" style="left:1295px">By Product Price</span><span class="c" style="left:1626px">0</span><svg class="up" width="8" height="5" viewBox="0 0 8 5"><path d="M0.4 4.4 L3.8 1 L7.2 4.4" fill="none" stroke="#0cb8cc" stroke-width="1.15"/></svg><svg class="dn" width="8" height="5" viewBox="0 0 8 5"><path d="M0.4 0.6 L3.8 4 L7.2 0.6" fill="none" stroke="#0cb8cc" stroke-width="1.15"/></svg><span class="edit">EDIT</span><svg class="dots" width="4" height="8" viewBox="0 0 4 8"><rect x="1" y="0" width="2" height="2" fill="#0cb8cc"/><rect x="1" y="3" width="2" height="2" fill="#0cb8cc"/><rect x="1" y="6" width="2" height="2" fill="#0cb8cc"/></svg></div>
<div class="row" style="top:567px"><svg class="truck" width="18" height="15" viewBox="0 0 18 15"><rect x="5.4" y="1" width="11.6" height="10.3" rx="1" fill="#efbc84"/><rect x="9" y="1" width="4" height="5.5" fill="#c48c52"/><rect x="1" y="3" width="4.6" height="8.3" rx=".8" fill="#f6c02a"/><rect x="1" y="5" width="2.8" height="3.8" fill="#4a82c4"/><rect x="11" y="4.8" width="4" height="4.2" fill="#e2eff5"/><rect x="11" y="4.8" width="4" height="1.2" fill="#2a90d0"/><rect x="4" y="10.8" width="13" height="1.2" fill="#3a3030"/><circle cx="4" cy="12.3" r="1.9" fill="#151010"/><circle cx="14" cy="12.3" r="1.9" fill="#151010"/><circle cx="4" cy="12.3" r=".7" fill="#aaa"/><circle cx="14" cy="12.3" r=".7" fill="#aaa"/></svg><span class="c" style="left:31px">52</span><span class="c" style="left:94px">Will Call</span><span class="c" style="left:342px">Will Call</span><span class="c" style="left:891px">Main</span><span class="c" style="left:1295px">By Product Price</span><span class="c" style="left:1626px">0</span><svg class="up" width="8" height="5" viewBox="0 0 8 5"><path d="M0.4 4.4 L3.8 1 L7.2 4.4" fill="none" stroke="#0cb8cc" stroke-width="1.15"/></svg><svg class="dn" width="8" height="5" viewBox="0 0 8 5"><path d="M0.4 0.6 L3.8 4 L7.2 0.6" fill="none" stroke="#0cb8cc" stroke-width="1.15"/></svg><span class="edit">EDIT</span><svg class="dots" width="4" height="8" viewBox="0 0 4 8"><rect x="1" y="0" width="2" height="2" fill="#0cb8cc"/><rect x="1" y="3" width="2" height="2" fill="#0cb8cc"/><rect x="1" y="6" width="2" height="2" fill="#0cb8cc"/></svg></div>
<div class="row" style="top:594px"><svg class="truck" width="18" height="15" viewBox="0 0 18 15"><rect x="5.4" y="1" width="11.6" height="10.3" rx="1" fill="#efbc84"/><rect x="9" y="1" width="4" height="5.5" fill="#c48c52"/><rect x="1" y="3" width="4.6" height="8.3" rx=".8" fill="#f6c02a"/><rect x="1" y="5" width="2.8" height="3.8" fill="#4a82c4"/><rect x="11" y="4.8" width="4" height="4.2" fill="#e2eff5"/><rect x="11" y="4.8" width="4" height="1.2" fill="#2a90d0"/><rect x="4" y="10.8" width="13" height="1.2" fill="#3a3030"/><circle cx="4" cy="12.3" r="1.9" fill="#151010"/><circle cx="14" cy="12.3" r="1.9" fill="#151010"/><circle cx="4" cy="12.3" r=".7" fill="#aaa"/><circle cx="14" cy="12.3" r=".7" fill="#aaa"/></svg><span class="c" style="left:31px">55</span><span class="c" style="left:94px">Will Call</span><span class="c" style="left:342px">Will Call</span><span class="c" style="left:891px">Main 33</span><span class="c" style="left:1295px">By Product Price</span><span class="c" style="left:1626px">0</span><svg class="up" width="8" height="5" viewBox="0 0 8 5"><path d="M0.4 4.4 L3.8 1 L7.2 4.4" fill="none" stroke="#0cb8cc" stroke-width="1.15"/></svg><svg class="dn" width="8" height="5" viewBox="0 0 8 5"><path d="M0.4 0.6 L3.8 4 L7.2 0.6" fill="none" stroke="#0cb8cc" stroke-width="1.15"/></svg><span class="edit">EDIT</span><svg class="dots" width="4" height="8" viewBox="0 0 4 8"><rect x="1" y="0" width="2" height="2" fill="#0cb8cc"/><rect x="1" y="3" width="2" height="2" fill="#0cb8cc"/><rect x="1" y="6" width="2" height="2" fill="#0cb8cc"/></svg></div>
<div class="row" style="top:621px"><svg class="truck" width="18" height="15" viewBox="0 0 18 15"><rect x="5.4" y="1" width="11.6" height="10.3" rx="1" fill="#efbc84"/><rect x="9" y="1" width="4" height="5.5" fill="#c48c52"/><rect x="1" y="3" width="4.6" height="8.3" rx=".8" fill="#f6c02a"/><rect x="1" y="5" width="2.8" height="3.8" fill="#4a82c4"/><rect x="11" y="4.8" width="4" height="4.2" fill="#e2eff5"/><rect x="11" y="4.8" width="4" height="1.2" fill="#2a90d0"/><rect x="4" y="10.8" width="13" height="1.2" fill="#3a3030"/><circle cx="4" cy="12.3" r="1.9" fill="#151010"/><circle cx="14" cy="12.3" r="1.9" fill="#151010"/><circle cx="4" cy="12.3" r=".7" fill="#aaa"/><circle cx="14" cy="12.3" r=".7" fill="#aaa"/></svg><span class="c" style="left:31px">86</span><span class="c" style="left:94px">Fed Ex</span><span class="c" style="left:342px">PST Shipping</span><span class="c" style="left:891px">PST WH2</span><span class="c" style="left:1295px">By Product Price</span><span class="c" style="left:1626px">0</span><svg class="up" width="8" height="5" viewBox="0 0 8 5"><path d="M0.4 4.4 L3.8 1 L7.2 4.4" fill="none" stroke="#0cb8cc" stroke-width="1.15"/></svg><svg class="dn" width="8" height="5" viewBox="0 0 8 5"><path d="M0.4 0.6 L3.8 4 L7.2 0.6" fill="none" stroke="#0cb8cc" stroke-width="1.15"/></svg><span class="edit">EDIT</span><svg class="dots" width="4" height="8" viewBox="0 0 4 8"><rect x="1" y="0" width="2" height="2" fill="#0cb8cc"/><rect x="1" y="3" width="2" height="2" fill="#0cb8cc"/><rect x="1" y="6" width="2" height="2" fill="#0cb8cc"/></svg></div>
<div class="sep" style="top:27px"></div>
<div class="sep" style="top:54px"></div>
<div class="sep" style="top:81px"></div>
<div class="sep" style="top:108px"></div>
<div class="sep" style="top:135px"></div>
<div class="sep" style="top:162px"></div>
<div class="sep" style="top:189px"></div>
<div class="sep" style="top:216px"></div>
<div class="sep" style="top:243px"></div>
<div class="sep" style="top:270px"></div>
<div class="sep" style="top:297px"></div>
<div class="sep" style="top:324px"></div>
<div class="sep" style="top:351px"></div>
<div class="sep" style="top:378px"></div>
<div class="sep" style="top:405px"></div>
<div class="sep" style="top:432px"></div>
<div class="sep" style="top:459px"></div>
<div class="sep" style="top:486px"></div>
<div class="sep" style="top:513px"></div>
<div class="sep" style="top:540px"></div>
<div class="sep" style="top:567px"></div>
<div class="sep" style="top:594px"></div>
<div class="sep" style="top:621px"></div>
</div>
<div class="abs fcancel"><span class="sx" style="transform-origin:0 50%;transform:scaleX(.89)">CANCEL</span></div>
<div class="abs fsave"><span class="sx" style="transform:scaleX(.92)">SAVE CHANGES</span></div>
<div class="abs overlay"></div>
<div class="abs modal">
<div class="abs mhead"><div class="abs mtitle"><span class="sx" style="transform-origin:0 50%;transform:scaleX(.926)">Ship Method Setup</span></div><svg class="abs" style="left:335px;top:16px" width="14" height="13" viewBox="0 0 14 13"><g fill="#9aacb5"><rect x="0" y="0" width="5" height="2"/><rect x="0" y="0" width="2" height="5"/><rect x="9" y="0" width="5" height="2"/><rect x="12" y="0" width="2" height="5"/><rect x="0" y="11" width="5" height="2"/><rect x="0" y="8" width="2" height="5"/><rect x="9" y="11" width="5" height="2"/><rect x="12" y="8" width="2" height="5"/></g></svg><svg class="abs" style="left:370px;top:16px" width="14" height="14" viewBox="0 0 14 14"><path d="M1.3 1.3L12.7 12.2M12.7 1.3L1.3 12.2" fill="none" stroke="#9aacb5" stroke-width="1.9" stroke-linecap="round"/></svg></div>
<div class="abs card">
<div class="abs info">This Ship Method will be tied to a Warehouse and be a subset of a Carrier.</div>
<div class="lbl" style="top:83px">Description</div><div class="inp" style="top:81px;height:20px"><span style="position:relative;top:1px"><span class="ph">Description</span></span></div>
<div class="lbl" style="top:109px">Carrier</div><div class="inp" style="top:107px;height:20px"><span style="position:relative;top:2px">Will Call</span><span class="tri" style="top:8px"></span></div>
<div class="lbl" style="top:136px">Warehouse</div><div class="inp" style="top:134px;height:20px"><span style="position:relative;top:2px">25 Warehouse Test</span><span class="tri" style="top:8px"></span></div>
<div class="lbl" style="top:162px">Web Calculate</div><div class="inp" style="top:160px;height:20px"><span style="position:relative;top:2px">None</span><span class="tri" style="top:8px"></span></div>
<div class="lbl" style="top:189px">Calculate</div><div class="inp" style="top:187px;height:20px"><span style="position:relative;top:2px">By Product Price</span><span class="tri" style="top:8px"></span></div>
<div class="lbl" style="top:215px">Account</div><div class="inp" style="top:213px;height:20px"><span style="position:relative;top:1px"><span class="ph">Account</span></span></div>
<div class="lbl" style="top:241px">Username</div><div class="inp" style="top:239px;height:20px"><span style="position:relative;top:1px"><span class="ph">Username</span></span></div>
<div class="lbl" style="top:268px">Password</div><div class="inp" style="top:266px;height:20px"><span style="position:relative;top:1px"><span class="ph">Password</span></span></div>
<div class="cb" style="top:298px"></div><div class="cbt" style="top:295px">Display on Web</div>
<div class="cb" style="top:326px"></div><div class="cbt" style="top:323px">Hide from Users</div>
<div class="lbl" style="top:350px">Hub ID</div><div class="inp" style="top:348px;height:20px"><span style="position:relative;top:1px">0</span></div>
<div class="lbl" style="top:377px">Change<br>Warehouse</div><div class="inp" style="top:375px;height:20px"><span style="position:relative;top:2px">(do not change)</span><span class="tri" style="top:8px"></span></div>
<div class="cb" style="top:426px"></div><div class="cbt" style="top:423px">Tax Warehouse Address</div>
<div class="lbl" style="top:450px">Multiplier</div><div class="inp" style="top:448px;height:20px"><span style="position:relative;top:1px">0</span></div>
<div class="lbl" style="top:476px">Shipper Number</div><div class="inp" style="top:474px;height:20px"><span style="position:relative;top:1px"><span class="ph">Shipper Number</span></span></div>
<div class="cb" style="top:507px"></div><div class="cbt" style="top:504px">Use Negotiated Rates</div>
<div class="cb" style="top:535px"></div><div class="cbt" style="top:532px">Include Surcharges</div>
<div class="lbl" style="top:559px">Backup Ship<br>Method</div><div class="inp" style="top:557px;height:20px"><span style="position:relative;top:2px">(none)</span><span class="tri" style="top:8px"></span></div>
<div class="lbl" style="top:604px">Priority</div><div class="inp" style="top:602px;height:20px"><span style="position:relative;top:1px"><span class="ph">Priority</span></span></div>
</div>
<div class="abs mfoot"><div class="abs mcancel"><span class="sx" style="transform-origin:0 50%;transform:scaleX(.9)">CANCEL</span></div><div class="abs madd"><span class="sx" style="transform:scaleX(.953)">ADD SHIP METHOD</span></div></div>
</div>
</body></html>
